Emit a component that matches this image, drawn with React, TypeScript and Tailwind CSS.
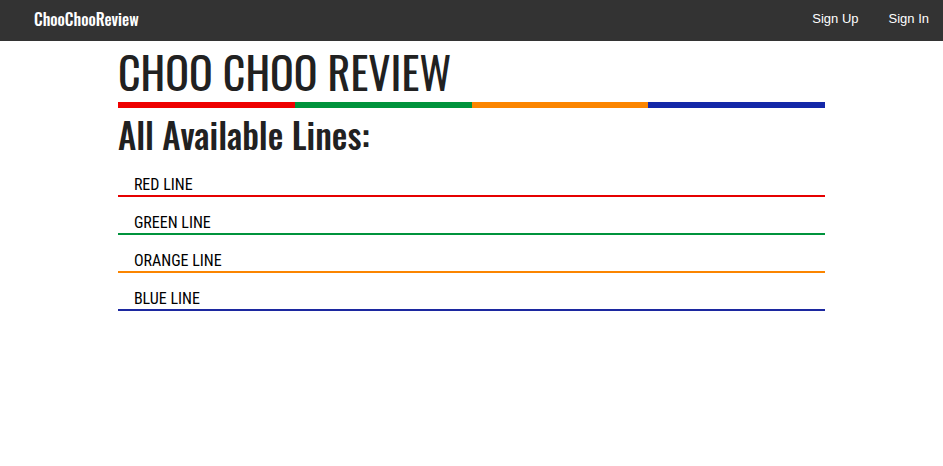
const lines = [
  { name: "RED LINE", bar: "bg-[#ee0000]", border: "border-[#e60000]" },
  { name: "GREEN LINE", bar: "bg-[#00933c]", border: "border-[#00933c]" },
  { name: "ORANGE LINE", bar: "bg-[#fb8500]", border: "border-[#fb8500]" },
  { name: "BLUE LINE", bar: "bg-[#1428a8]", border: "border-[#1c28a0]" },
];

const display = "font-['Oswald','Roboto_Condensed','Liberation_Sans_Narrow','Roboto',sans-serif]";
const condensed = "font-['Roboto_Condensed','Liberation_Sans_Narrow','Roboto',sans-serif]";

export default function App() {
  return (
    <div className="min-h-screen bg-white font-['Liberation_Sans',Arial,sans-serif]">
      <nav className="flex h-[41px] items-center justify-between bg-[#333333] pr-[14px] pl-[34px] text-white">
        <a href="#" className={`${display} pb-1 text-base leading-6 font-medium`}>
          ChooChooReview
        </a>
        <div className="flex gap-[30px] pb-1 text-[13px] leading-5">
          <a href="#signup">Sign Up</a>
          <a href="#signin">Sign In</a>
        </div>
      </nav>
      <main className="mx-auto w-3/4 text-[#212121]">
        <h1 className={`${display} text-[44px] leading-[61px]`}>CHOO CHOO REVIEW</h1>
        <div className="flex h-[6px]">
          {lines.map((line) => (
            <div key={line.name} className={`flex-1 ${line.bar}`} />
          ))}
        </div>
        <h2 className={`${display} text-[35px] leading-[52px] font-medium`}>All Available Lines:</h2>
        <ul className={`${condensed} flex flex-col gap-4 pt-[15px] text-base text-black`}>
          {lines.map((line) => (
            <li key={line.name} className={`border-b-2 pl-4 leading-5 ${line.border}`}>
              <a href="#line">{line.name}</a>
            </li>
          ))}
        </ul>
      </main>
    </div>
  );
}
